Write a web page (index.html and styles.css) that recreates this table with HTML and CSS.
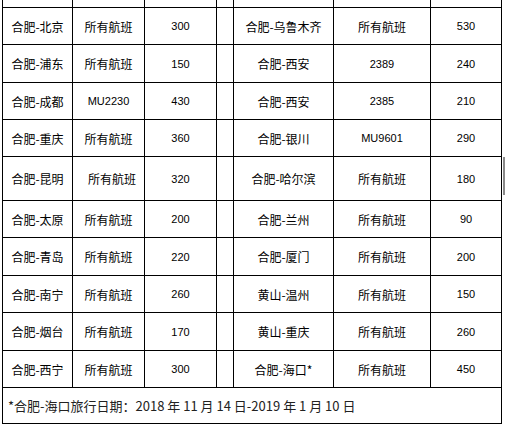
FILE: index.html
```html
<!DOCTYPE html>
<html lang="zh">
<head>
<meta charset="utf-8">
<title>航线票价</title>
<link rel="stylesheet" href="styles.css">
</head>
<body>
<div class="page">
  <div class="sheet">
    <div></div><div></div><div></div><div></div><div></div><div></div><div></div>

    <div>合肥-北京</div><div>所有航班</div><div class="num">300</div><div></div><div>合肥-乌鲁木齐</div><div>所有航班</div><div class="num">530</div>
    <div>合肥-浦东</div><div>所有航班</div><div class="num">150</div><div></div><div>合肥-西安</div><div class="num">2389</div><div class="num">240</div>
    <div>合肥-成都</div><div class="num">MU2230</div><div class="num">430</div><div></div><div>合肥-西安</div><div class="num">2385</div><div class="num">210</div>
    <div>合肥-重庆</div><div>所有航班</div><div class="num">360</div><div></div><div>合肥-银川</div><div class="num">MU9601</div><div class="num">290</div>
    <div>合肥-昆明</div><div class="off">所有航班</div><div class="num">320</div><div></div><div>合肥-哈尔滨</div><div>所有航班</div><div class="num">180</div>
    <div>合肥-太原</div><div>所有航班</div><div class="num">200</div><div></div><div>合肥-兰州</div><div>所有航班</div><div class="num">90</div>
    <div>合肥-青岛</div><div>所有航班</div><div class="num">220</div><div></div><div>合肥-厦门</div><div>所有航班</div><div class="num">200</div>
    <div>合肥-南宁</div><div>所有航班</div><div class="num">260</div><div></div><div>黄山-温州</div><div>所有航班</div><div class="num">150</div>
    <div>合肥-烟台</div><div>所有航班</div><div class="num">170</div><div></div><div>黄山-重庆</div><div>所有航班</div><div class="num">260</div>
    <div>合肥-西宁</div><div>所有航班</div><div class="num">300</div><div></div><div>合肥-海口*</div><div>所有航班</div><div class="num">450</div>

    <div class="note">*合肥-海口旅行日期：2018 年 11 月 14 日-2019 年 1 月 10 日</div>
  </div>
  <div class="edge"></div>
</div>
</body>
</html>
```

FILE: styles.css
```css
html, body {
  margin: 0;
  padding: 0;
  background: #fff;
}

body {
  width: 505px;
  height: 425px;
  overflow: hidden;
}

.page {
  display: flex;
  align-items: flex-start;
  padding-left: 2px;
  margin-top: -24px;
}

.sheet {
  display: grid;
  grid-template-columns: 69px 71px 71px 16px 99px 96px 70px;
  grid-template-rows: 30px 36px 37px 36px 36px 43px 36px 37px 36px 37px 36px 35px;
  gap: 1px;
  padding: 1px;
  background: #000;
}

.sheet > div {
  background: #fff;
  display: flex;
  align-items: center;
  justify-content: center;
  font-family: "Noto Sans CJK SC", "Noto Sans", sans-serif;
  font-size: 12px;
  color: #000;
  white-space: nowrap;
}

.sheet > .num {
  font-family: "Liberation Sans", "Noto Sans CJK SC", sans-serif;
  font-size: 11px;
}

.sheet > .off {
  padding-left: 7px;
}

.sheet > .note {
  grid-column: 1 / -1;
  justify-content: flex-start;
  padding-left: 5px;
  font-size: 13px;
  color: #222;
}

.edge {
  width: 2px;
  height: 38px;
  margin-left: 1px;
  margin-top: 181px;
  background: #8a8a8a;
}
```
